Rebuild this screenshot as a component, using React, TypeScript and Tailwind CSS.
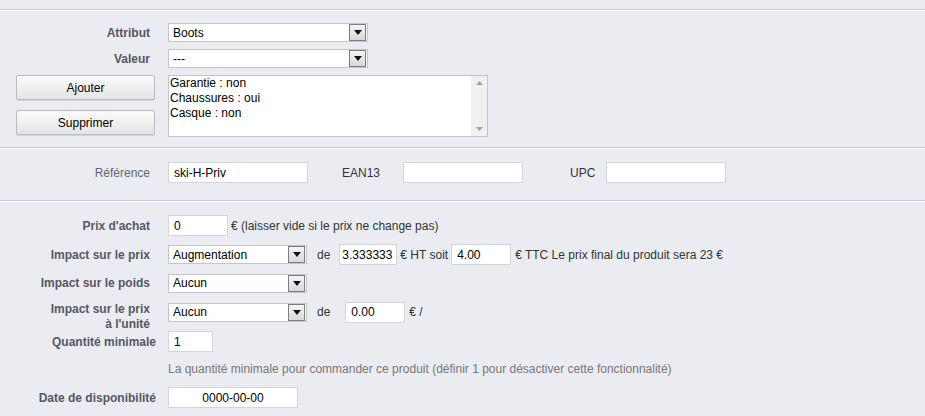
import React from "react";

/* ---------- small widgets ---------- */
function Select({ value, width }: { value: string; width: number }) {
  return (
    <div
      className="flex h-[19px] items-center border border-[#c3c5cc] bg-white pl-[4px] pr-px text-[12px] text-black"
      style={{ width }}
    >
      <span className="flex-1 leading-none">{value}</span>
      <span className="flex h-[17px] w-[17px] items-center justify-center border border-[#7b7c80] bg-gradient-to-b from-[#f4f4f4] to-[#d9d9d9]">
        <svg width="8" height="5" viewBox="0 0 8 5">
          <path d="M0 0h8L4 5z" fill="#111" />
        </svg>
      </span>
    </div>
  );
}

function Input({
  value = "",
  width,
  center = false,
  px = "px-[5px]",
}: {
  value?: string;
  width: number;
  center?: boolean;
  px?: string;
}) {
  return (
    <div
      className={
        "flex h-[21px] items-center overflow-hidden whitespace-nowrap border border-[#d3d5da] bg-white text-[12px] text-black " +
        px +
        (center ? " justify-center" : "")
      }
      style={{ width }}
    >
      {value}
    </div>
  );
}

function Btn({ children }: { children: React.ReactNode }) {
  return (
    <button className="h-[25px] w-[139px] rounded-[2px] border border-[#b9bbc2] bg-gradient-to-b from-[#fbfbfb] to-[#e4e4e6] text-[12px] text-black shadow-[0_1px_0_#d6d7dc]">
      {children}
    </button>
  );
}

function Sep() {
  return (
    <div>
      <div className="h-px bg-[#c8cad2]" />
      <div className="h-px bg-white" />
    </div>
  );
}

const Label = ({
  children,
  w = "w-[150px]",
}: {
  children: React.ReactNode;
  w?: string;
}) => (
  <div className={"shrink-0 text-right text-[12px] font-bold text-[#555764] " + w}>
    {children}
  </div>
);

/* ─────────────────────────────────────────────────────────── */
export default function App() {
  return (
    <div className="h-[416px] w-[925px] overflow-hidden bg-[#ebecf2] font-['Liberation_Sans',Arial,sans-serif] text-[12px]">
      <div className="h-[9px]" />
      <Sep />

      {/* -------- attributs -------- */}
      <div className="pt-[12px] pb-[10px]">
        <div className="flex h-[19px] items-center">
          <Label>Attribut</Label>
          <div className="ml-[18px]">
            <Select value="Boots" width={200} />
          </div>
        </div>
        <div className="mt-[7px] flex h-[19px] items-center">
          <Label>Valeur</Label>
          <div className="ml-[18px]">
            <Select value="---" width={200} />
          </div>
        </div>
        <div className="mt-[7px] flex pl-[16px]">
          <div className="flex w-[139px] flex-col gap-[10px]">
            <Btn>Ajouter</Btn>
            <Btn>Supprimer</Btn>
          </div>
          <div className="ml-[13px] flex h-[62px] w-[320px] border border-[#c3c5cc] bg-white">
            <div className="flex-1 pl-[1px] text-[12px] leading-[15px] text-black">
              <div>Garantie : non</div>
              <div>Chaussures : oui</div>
              <div>Casque : non</div>
            </div>
            <div className="flex w-[16px] flex-col items-center justify-between bg-[#f0f0f0] py-[5px]">
              <svg width="7" height="4" viewBox="0 0 7 4">
                <path d="M0 4h7L3.5 0z" fill="#a3a3a3" />
              </svg>
              <svg width="7" height="4" viewBox="0 0 7 4">
                <path d="M0 0h7L3.5 4z" fill="#a3a3a3" />
              </svg>
            </div>
          </div>
        </div>
      </div>

      <Sep />

      {/* -------- références -------- */}
      <div className="flex h-[51px] items-center pb-[4px] text-[12px]">
        <div className="w-[150px] shrink-0 text-right text-[#646672]">Référence</div>
        <div className="ml-[18px]">
          <Input value="ski-H-Priv" width={140} />
        </div>
        <div className="ml-[34px] text-[#333]">EAN13</div>
        <div className="ml-[23px]">
          <Input width={120} />
        </div>
        <div className="ml-[47px] text-[#333]">UPC</div>
        <div className="ml-[11px]">
          <Input width={120} />
        </div>
      </div>

      <Sep />

      {/* -------- prix -------- */}
      <div className="pt-[13px] text-[#333]">
        <div className="flex h-[21px] items-center">
          <Label>Prix d'achat</Label>
          <div className="ml-[18px]">
            <Input value="0" width={60} />
          </div>
          <span className="ml-[3px]">€ (laisser vide si le prix ne change pas)</span>
        </div>

        <div className="mt-[8px] flex h-[21px] items-center">
          <Label>Impact sur le prix</Label>
          <div className="ml-[18px]">
            <Select value="Augmentation" width={139} />
          </div>
          <span className="ml-[10px]">de</span>
          <div className="ml-[9px]">
            <Input value="3.333333" width={58} px="px-[2px]" />
          </div>
          <span className="ml-[3px]">€ HT soit</span>
          <div className="ml-[3px]">
            <Input value="4.00" width={60} />
          </div>
          <span className="ml-[4px]">€ TTC Le prix final du produit sera 23 €</span>
        </div>

        <div className="mt-[8px] flex h-[20px] items-center">
          <Label>Impact sur le poids</Label>
          <div className="ml-[18px]">
            <Select value="Aucun" width={139} />
          </div>
        </div>

        <div className="mt-[9px] flex items-start">
          <Label>
            <div className="leading-[15px]">Impact sur le prix</div>
            <div className="leading-[15px]">à l'unité</div>
          </Label>
          <div className="ml-[18px] flex h-[20px] items-center">
            <Select value="Aucun" width={139} />
            <span className="ml-[10px]">de</span>
            <div className="ml-[15px]">
              <Input value="0.00" width={60} />
            </div>
            <span className="ml-[4px]">€ /</span>
          </div>
        </div>

        <div className="-mt-px flex h-[21px] items-center">
          <Label w="w-[156px]">Quantité minimale</Label>
          <div className="ml-[12px]">
            <Input value="1" width={45} />
          </div>
        </div>

        <div className="mt-[8px] pl-[168px] text-[#777]">
          La quantité minimale pour commander ce produit (définir 1 pour désactiver cette fonctionnalité)
        </div>

        <div className="mt-[9px] flex h-[21px] items-center">
          <Label w="w-[156px]">Date de disponibilité</Label>
          <div className="ml-[12px]">
            <Input value="0000-00-00" width={130} center />
          </div>
        </div>
      </div>
    </div>
  );
}
